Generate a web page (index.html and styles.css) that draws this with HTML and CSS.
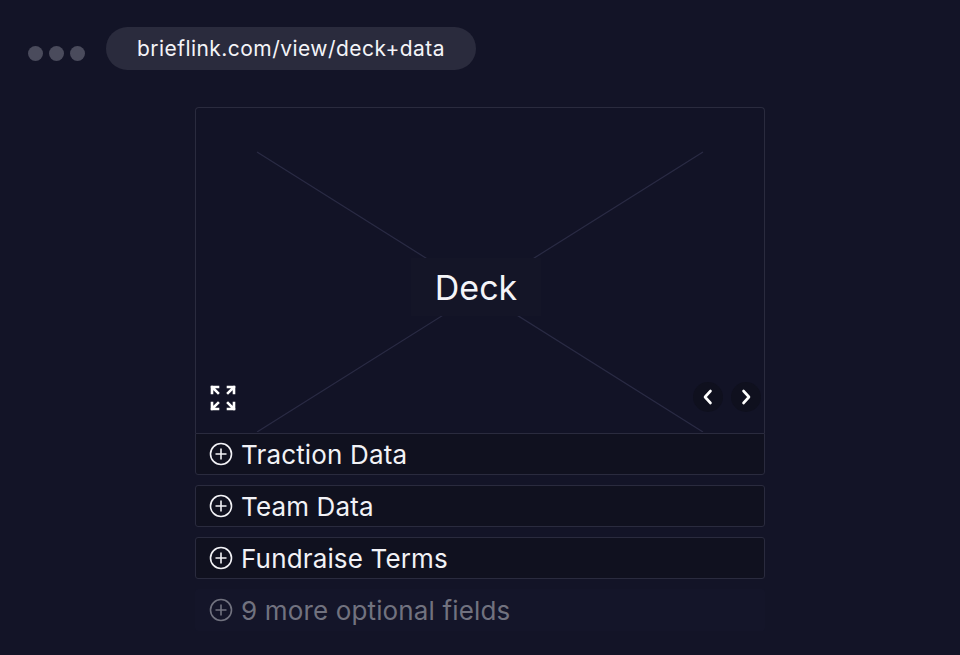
FILE: index.html
```html
<!DOCTYPE html>
<html>
<head>
<meta charset="utf-8">
<link rel="stylesheet" href="styles.css">
</head>
<body>
<header class="bar">
  <div class="dots"><span class="dot"></span><span class="dot"></span><span class="dot"></span></div>
  <div class="url">brieflink.com/view/deck+data</div>
</header>
<main class="col">
  <section class="deck">
    <svg class="cross" width="568" height="324" viewBox="0 0 568 324">
      <line x1="61" y1="44" x2="507" y2="324" stroke="#2a2b44" stroke-width="1.2"/>
      <line x1="507" y1="44" x2="61" y2="324" stroke="#2a2b44" stroke-width="1.2"/>
    </svg>
    <div class="label">Deck</div>
    <svg class="expand" width="26" height="26" viewBox="0 0 26 26" fill="none" stroke="#fff" stroke-width="2.6" stroke-linecap="square">
      <path d="M2 8V2H8M2 2L8 8" />
      <path d="M24 8V2H18M24 2L18 8" />
      <path d="M2 18V24H8M2 24L8 18" />
      <path d="M24 18V24H18M24 24L18 18" />
    </svg>
    <div class="nav">
      <span class="navbtn"><svg width="16" height="16" viewBox="0 0 16 16" fill="none" stroke="#fff" stroke-width="2.6" stroke-linecap="round" stroke-linejoin="round"><path d="M10.5 2L5 8L10.5 14"/></svg></span>
      <span class="navbtn"><svg width="16" height="16" viewBox="0 0 16 16" fill="none" stroke="#fff" stroke-width="2.6" stroke-linecap="round" stroke-linejoin="round"><path d="M5.5 2L11 8L5.5 14"/></svg></span>
    </div>
  </section>
  <div class="row first">
    <svg class="plus" width="24" height="24" viewBox="0 0 24 24" fill="none" stroke="currentColor" stroke-width="1.6"><circle cx="12" cy="12" r="10.5"/><path d="M12 6.5V17.5M6.5 12H17.5"/></svg>
    <span>Traction Data</span>
  </div>
  <div class="row">
    <svg class="plus" width="24" height="24" viewBox="0 0 24 24" fill="none" stroke="currentColor" stroke-width="1.6"><circle cx="12" cy="12" r="10.5"/><path d="M12 6.5V17.5M6.5 12H17.5"/></svg>
    <span>Team Data</span>
  </div>
  <div class="row">
    <svg class="plus" width="24" height="24" viewBox="0 0 24 24" fill="none" stroke="currentColor" stroke-width="1.6"><circle cx="12" cy="12" r="10.5"/><path d="M12 6.5V17.5M6.5 12H17.5"/></svg>
    <span>Fundraise Terms</span>
  </div>
  <div class="row more">
    <svg class="plus" width="24" height="24" viewBox="0 0 24 24" fill="none" stroke="currentColor" stroke-width="1.6"><circle cx="12" cy="12" r="10.5"/><path d="M12 6.5V17.5M6.5 12H17.5"/></svg>
    <span>9 more optional fields</span>
  </div>
</main>
</body>
</html>
```

FILE: styles.css
```css
* { box-sizing: border-box; }
html, body { margin: 0; height: 100%; }
body {
  background: #131427;
  font-family: Inter, "Noto Sans", sans-serif;
  color: #f2f2f6;
  overflow: hidden;
}
.bar {
  display: flex;
  align-items: center;
  padding: 27px 0 0 28px;
}
.dots { display: flex; gap: 6px; margin-top: 10px; }
.dot {
  width: 15px; height: 15px; border-radius: 50%;
  background: #4a4b5c;
}
.url {
  margin-left: 21px;
  height: 43px;
  width: 370px;
  border-radius: 22px;
  background: #2a2b3d;
  display: flex;
  align-items: center;
  padding-left: 31px;
  font-size: 21px;
  letter-spacing: 0.45px;
  color: #f4f4f8;
}
.col {
  width: 570px;
  margin: 37px 0 0 195px;
  display: flex;
  flex-direction: column;
}
.deck {
  position: relative;
  height: 326px;
  border: 1px solid #2a2b3e;
  border-bottom: none;
  border-radius: 4px 4px 0 0;
  background: #121326;
}
.cross { display: block; }
.label {
  position: absolute;
  left: 215px; top: 150px;
  width: 130px; height: 58px;
  background: #141527;
  display: flex; align-items: center; justify-content: center;
  font-size: 34px;
  color: #f4f4f8;
}
.expand { position: absolute; left: 14px; top: 277px; }
.nav { position: absolute; right: 3px; top: 274px; display: flex; gap: 8px; }
.navbtn {
  width: 30px; height: 30px; border-radius: 50%;
  background: #0f101e;
  display: flex; align-items: center; justify-content: center;
}
.row {
  height: 42px;
  border: 1px solid #2a2b3e;
  border-radius: 3px;
  background: #10111f;
  display: flex;
  align-items: center;
  padding-left: 13px;
  gap: 8px;
  font-size: 26px;
  letter-spacing: 0.15px;
  margin-top: 10px;
  color: #f2f2f6;
}
.row.first { margin-top: 0; border-radius: 0 0 3px 3px; }
.plus { flex: none; }
.row.more {
  border-color: transparent;
  background: #141529;
  color: #71727f;
}
```
